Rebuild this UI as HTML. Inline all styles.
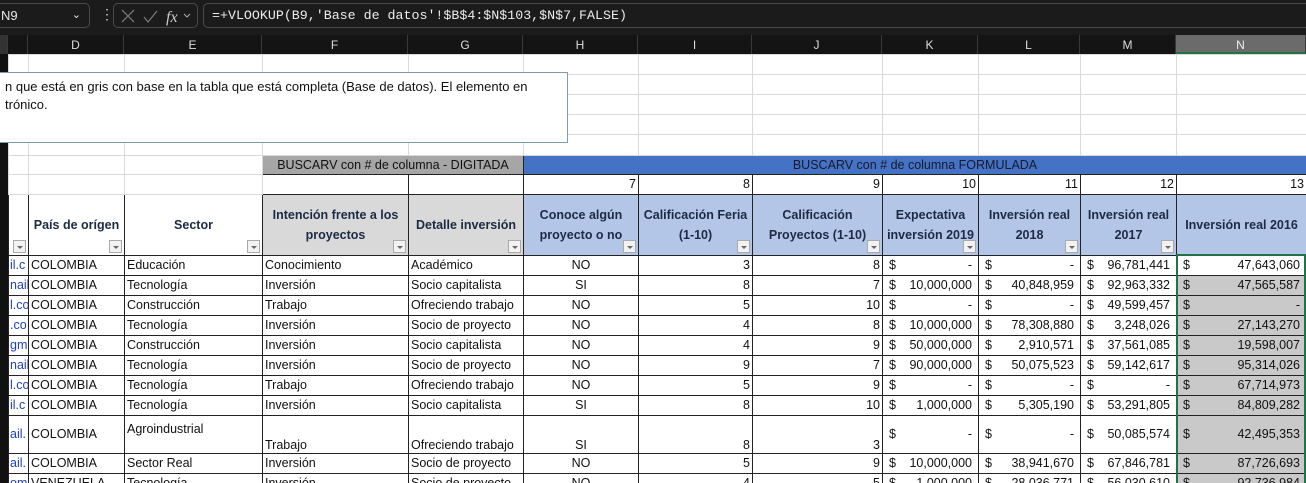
<!DOCTYPE html>
<html><head><meta charset="utf-8">
<style>
*{box-sizing:border-box;margin:0;padding:0}
html,body{width:1306px;height:483px;overflow:hidden}
body{background:#fff;font-family:"Liberation Sans",Arial,sans-serif;position:relative}
#top{position:absolute;left:0;top:0;width:1306px;height:35px;background:#1b1b1b}
.nb{position:absolute;left:-4px;top:3px;width:94px;height:25px;border:1px solid #4a4a4a;border-radius:5px;color:#e8e8e8;font-size:13px;line-height:23px;padding-left:4px}
.fb1{position:absolute;left:113px;top:3px;width:85px;height:25px;border:1px solid #4a4a4a;border-radius:5px}
.fb2{position:absolute;left:203px;top:3px;width:1110px;height:25px;border:1px solid #4a4a4a;border-radius:5px;color:#ececec;font-family:"Liberation Mono",monospace;font-size:13.3px;line-height:23px;padding-left:8px}
#colh{position:absolute;left:0;top:35px;width:1306px;height:19px;background:#141414;color:#ddd;font-size:12px}
#colh div{position:absolute;top:0;height:19px;line-height:20px;text-align:center;border-right:1px solid #3a3a3a}
#strip{position:absolute;left:0;top:54px;width:8px;height:429px;background:#111}
table{position:absolute;left:8px;top:54px;width:1298px;border-collapse:collapse;table-layout:fixed}
td{font-size:12.5px;white-space:nowrap;overflow:hidden;padding:0 2px;border:1px solid #d9d9d9;color:#111;line-height:15px;position:relative}
.k{border:1px solid #222!important}
.r{text-align:right}.c{text-align:center}
.em{color:#1f3fbf;padding:0 1px}
.hd{font-weight:bold;text-align:center;white-space:normal;line-height:20px;color:#1c2a44;vertical-align:middle}
.gy{background:#d9d9d9}.bl{background:#b4c6e7}
.fl{position:absolute;right:2px;bottom:2px;width:13px;height:13px;border:1px solid #aaa;background:#f2f2f2}
.fl:after{content:"";position:absolute;left:3px;top:5px;border-left:3px solid transparent;border-right:3px solid transparent;border-top:3px solid #666}
.m{display:flex;justify-content:space-between;padding:0 4px}
.ng{background:#c9c9c9}
#box{position:absolute;left:-2px;top:72px;width:570px;height:71px;border:1px solid #7f9db0;background:#fff;font-size:13px;line-height:18px;padding:5px 0 0 6px;color:#111}
#sel{position:absolute;left:1176px;top:254px;width:130px;height:232px;border:2px solid #217346;pointer-events:none}
</style></head><body>
<div id="top">
<div class="nb">N9<span style="position:absolute;right:8px;top:0;font-size:11px">&#8964;</span></div>
<div style="position:absolute;left:100px;top:6px;color:#ccc;font-size:14px">&#8942;</div>
<div class="fb1"><svg width="85" height="25"><path d="M8 6l12 12M20 6L8 18" stroke="#777" stroke-width="1.3"/><path d="M30 13l4 5 9-11" stroke="#777" stroke-width="1.3" fill="none"/><text x="52" y="18" fill="#ccc" font-family="Liberation Serif" font-style="italic" font-size="16">fx</text><path d="M70 10l3 3 3-3" stroke="#aaa" fill="none"/></svg></div>
<div class="fb2">=+VLOOKUP(B9,'Base de datos'!$B$4:$N$103,$N$7,FALSE)</div>
</div>
<div id="colh">
<div style="left:0;width:8px;background:#333"></div>
<div style="left:8px;width:20px"></div>
<div style="left:28px;width:96px">D</div>
<div style="left:124px;width:138px">E</div>
<div style="left:262px;width:146px">F</div>
<div style="left:408px;width:115px">G</div>
<div style="left:523px;width:115px">H</div>
<div style="left:638px;width:114px">I</div>
<div style="left:752px;width:130px">J</div>
<div style="left:882px;width:96px">K</div>
<div style="left:978px;width:102px">L</div>
<div style="left:1080px;width:96px">M</div>
<div style="left:1176px;width:130px;background:#6b6b6b;border-bottom:2px solid #217346;color:#eee">N</div>
</div>
<div id="strip"></div>
<table>
<colgroup><col style="width:20px"><col style="width:96px"><col style="width:138px"><col style="width:146px"><col style="width:115px"><col style="width:115px"><col style="width:114px"><col style="width:130px"><col style="width:96px"><col style="width:102px"><col style="width:96px"><col style="width:130px"></colgroup>
<tr style="height:20px"><td></td><td></td><td></td><td></td><td></td><td></td><td></td><td></td><td></td><td></td><td></td><td></td></tr>
<tr style="height:20px"><td></td><td></td><td></td><td></td><td></td><td></td><td></td><td></td><td></td><td></td><td></td><td></td></tr>
<tr style="height:20px"><td></td><td></td><td></td><td></td><td></td><td></td><td></td><td></td><td></td><td></td><td></td><td></td></tr>
<tr style="height:20px"><td></td><td></td><td></td><td></td><td></td><td></td><td></td><td></td><td></td><td></td><td></td><td></td></tr>
<tr style="height:21px"><td></td><td></td><td></td><td></td><td></td><td></td><td></td><td></td><td></td><td></td><td></td><td></td></tr>
<tr style="height:19px"><td></td><td></td><td></td><td colspan="2" class="c k" style="background:#a6a6a6">BUSCARV con # de columna - DIGITADA</td><td colspan="7" class="c k" style="background:#4472c4;color:#1a1a2a">BUSCARV con # de columna FORMULADA</td></tr>
<tr style="height:20px"><td></td><td></td><td></td><td class="k"></td><td class="k"></td><td class="r k">7</td><td class="r k">8</td><td class="r k">9</td><td class="r k">10</td><td class="r k">11</td><td class="r k">12</td><td class="r k">13</td></tr>
<tr style="height:61px"><td class="k"><span class="fl"></span></td><td class="hd k">País de orígen<span class="fl"></span></td><td class="hd k">Sector<span class="fl"></span></td><td class="hd k gy">Intención frente a los proyectos<span class="fl"></span></td><td class="hd k gy">Detalle inversión<span class="fl"></span></td><td class="hd k bl">Conoce algún proyecto o no<span class="fl"></span></td><td class="hd k bl">Calificación Feria (1-10)<span class="fl"></span></td><td class="hd k bl">Calificación Proyectos (1-10)<span class="fl"></span></td><td class="hd k bl">Expectativa inversión 2019<span class="fl"></span></td><td class="hd k bl">Inversión real 2018<span class="fl"></span></td><td class="hd k bl">Inversión real 2017<span class="fl"></span></td><td class="hd k bl">Inversión real 2016</td></tr>
<tr style="height:20px"><td class="k em">il.c</td><td class="k">COLOMBIA</td><td class="k">Educación</td><td class="k">Conocimiento</td><td class="k">Académico</td><td class="k c">NO</td><td class="k r">3</td><td class="k r">8</td><td class="k"><div class="m"><span>$</span><span>-</span></div></td><td class="k"><div class="m"><span>$</span><span>-</span></div></td><td class="k"><div class="m"><span>$</span><span>96,781,441</span></div></td><td class="k"><div class="m"><span>$</span><span>47,643,060</span></div></td></tr>
<tr style="height:20px"><td class="k em">nail</td><td class="k">COLOMBIA</td><td class="k">Tecnología</td><td class="k">Inversión</td><td class="k">Socio capitalista</td><td class="k c">SI</td><td class="k r">8</td><td class="k r">7</td><td class="k"><div class="m"><span>$</span><span>10,000,000</span></div></td><td class="k"><div class="m"><span>$</span><span>40,848,959</span></div></td><td class="k"><div class="m"><span>$</span><span>92,963,332</span></div></td><td class="k ng"><div class="m"><span>$</span><span>47,565,587</span></div></td></tr>
<tr style="height:20px"><td class="k em">l.co</td><td class="k">COLOMBIA</td><td class="k">Construcción</td><td class="k">Trabajo</td><td class="k">Ofreciendo trabajo</td><td class="k c">NO</td><td class="k r">5</td><td class="k r">10</td><td class="k"><div class="m"><span>$</span><span>-</span></div></td><td class="k"><div class="m"><span>$</span><span>-</span></div></td><td class="k"><div class="m"><span>$</span><span>49,599,457</span></div></td><td class="k ng"><div class="m"><span>$</span><span>-</span></div></td></tr>
<tr style="height:20px"><td class="k em">.co</td><td class="k">COLOMBIA</td><td class="k">Tecnología</td><td class="k">Inversión</td><td class="k">Socio de proyecto</td><td class="k c">NO</td><td class="k r">4</td><td class="k r">8</td><td class="k"><div class="m"><span>$</span><span>10,000,000</span></div></td><td class="k"><div class="m"><span>$</span><span>78,308,880</span></div></td><td class="k"><div class="m"><span>$</span><span>3,248,026</span></div></td><td class="k ng"><div class="m"><span>$</span><span>27,143,270</span></div></td></tr>
<tr style="height:20px"><td class="k em">gm</td><td class="k">COLOMBIA</td><td class="k">Construcción</td><td class="k">Inversión</td><td class="k">Socio capitalista</td><td class="k c">NO</td><td class="k r">4</td><td class="k r">9</td><td class="k"><div class="m"><span>$</span><span>50,000,000</span></div></td><td class="k"><div class="m"><span>$</span><span>2,910,571</span></div></td><td class="k"><div class="m"><span>$</span><span>37,561,085</span></div></td><td class="k ng"><div class="m"><span>$</span><span>19,598,007</span></div></td></tr>
<tr style="height:20px"><td class="k em">nail</td><td class="k">COLOMBIA</td><td class="k">Tecnología</td><td class="k">Inversión</td><td class="k">Socio de proyecto</td><td class="k c">NO</td><td class="k r">9</td><td class="k r">7</td><td class="k"><div class="m"><span>$</span><span>90,000,000</span></div></td><td class="k"><div class="m"><span>$</span><span>50,075,523</span></div></td><td class="k"><div class="m"><span>$</span><span>59,142,617</span></div></td><td class="k ng"><div class="m"><span>$</span><span>95,314,026</span></div></td></tr>
<tr style="height:20px"><td class="k em">l.co</td><td class="k">COLOMBIA</td><td class="k">Tecnología</td><td class="k">Trabajo</td><td class="k">Ofreciendo trabajo</td><td class="k c">NO</td><td class="k r">5</td><td class="k r">9</td><td class="k"><div class="m"><span>$</span><span>-</span></div></td><td class="k"><div class="m"><span>$</span><span>-</span></div></td><td class="k"><div class="m"><span>$</span><span>-</span></div></td><td class="k ng"><div class="m"><span>$</span><span>67,714,973</span></div></td></tr>
<tr style="height:20px"><td class="k em">il.c</td><td class="k">COLOMBIA</td><td class="k">Tecnología</td><td class="k">Inversión</td><td class="k">Socio capitalista</td><td class="k c">SI</td><td class="k r">8</td><td class="k r">10</td><td class="k"><div class="m"><span>$</span><span>1,000,000</span></div></td><td class="k"><div class="m"><span>$</span><span>5,305,190</span></div></td><td class="k"><div class="m"><span>$</span><span>53,291,805</span></div></td><td class="k ng"><div class="m"><span>$</span><span>84,809,282</span></div></td></tr>
<tr style="height:38px"><td class="k em">ail.</td><td class="k">COLOMBIA</td><td class="k" style="vertical-align:top;padding-top:6px">Agroindustrial</td><td class="k" style="vertical-align:bottom">Trabajo</td><td class="k" style="vertical-align:bottom">Ofreciendo trabajo</td><td class="k c" style="vertical-align:bottom">SI</td><td class="k r" style="vertical-align:bottom">8</td><td class="k r" style="vertical-align:bottom">3</td><td class="k"><div class="m"><span>$</span><span>-</span></div></td><td class="k"><div class="m"><span>$</span><span>-</span></div></td><td class="k"><div class="m"><span>$</span><span>50,085,574</span></div></td><td class="k ng"><div class="m"><span>$</span><span>42,495,353</span></div></td></tr>
<tr style="height:20px"><td class="k em">ail.</td><td class="k">COLOMBIA</td><td class="k">Sector Real</td><td class="k">Inversión</td><td class="k">Socio de proyecto</td><td class="k c">NO</td><td class="k r">5</td><td class="k r">9</td><td class="k"><div class="m"><span>$</span><span>10,000,000</span></div></td><td class="k"><div class="m"><span>$</span><span>38,941,670</span></div></td><td class="k"><div class="m"><span>$</span><span>67,846,781</span></div></td><td class="k ng"><div class="m"><span>$</span><span>87,726,693</span></div></td></tr>
<tr style="height:20px"><td class="k em">om</td><td class="k">VENEZUELA</td><td class="k">Tecnología</td><td class="k">Inversión</td><td class="k">Socio de proyecto</td><td class="k c">NO</td><td class="k r">4</td><td class="k r">5</td><td class="k"><div class="m"><span>$</span><span>1,000,000</span></div></td><td class="k"><div class="m"><span>$</span><span>28,036,771</span></div></td><td class="k"><div class="m"><span>$</span><span>56,030,610</span></div></td><td class="k ng"><div class="m"><span>$</span><span>92,736,984</span></div></td></tr>
</table>
<div id="box">n que está en gris con base en la tabla que está completa (Base de datos). El elemento en<br>trónico.</div>
<div id="sel"></div>
</body></html>
